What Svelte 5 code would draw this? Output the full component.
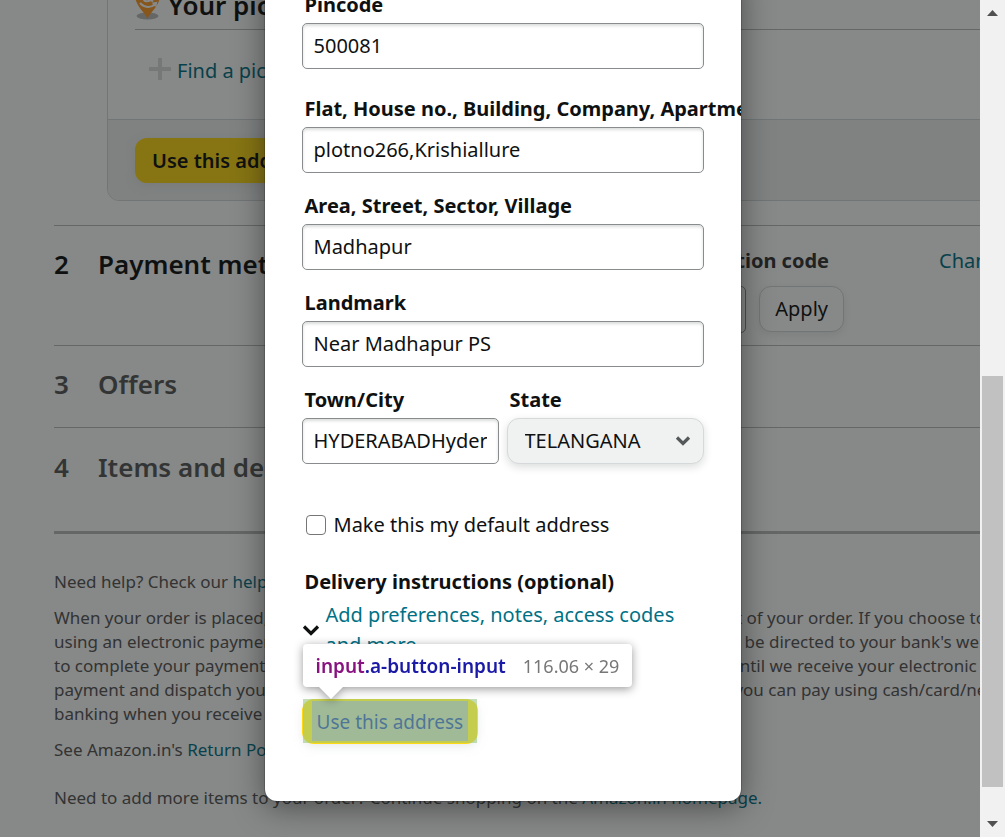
<script>
  let pincode = $state('500081');
  let flat = $state('plotno266,Krishiallure');
  let area = $state('Madhapur');
  let landmark = $state('Near Madhapur PS');
  let city = $state('HYDERABADHyderabad');
  let makeDefault = $state(false);
</script>

<div class="window">
  <main class="page">
    <section class="card">
      <div class="card-body">
        <h3 class="pickup">
          <svg width="25" height="48" viewBox="0 0 25 48" aria-hidden="true">
            <ellipse cx="12.500" cy="35" rx="11" ry="3.500" fill="#bbb" />
            <path d="M12.500 38C10 31 0 25 0 14a12.500 12.500 0 0 1 25 0c0 11-10 17-12.500 24z" fill="#ff9a26" />
            <path d="M16 18c-1.500 3-7 3-7 0s4-3.500 7-3.500M16 13v6l2 1.500" fill="none" stroke="#fff" stroke-width="2.200" />
            <path d="M5 22c4.500 5 10.500 5 15 1.500M17.500 22.500l3.500-.500-.500 3.500" fill="none" stroke="#fff" stroke-width="2" />
          </svg>
          Your pickup location
        </h3>
        <div class="find">
          <svg width="22" height="26" viewBox="0 0 22 26" aria-hidden="true">
            <path d="M11 0v22M0 11h22" stroke="#ddd" stroke-width="4" />
          </svg>
          <a href="#pickup">Find a pickup location near you</a>
        </div>
      </div>
      <div class="card-foot">
        <button class="primary">Use this address</button>
      </div>
    </section>

    <section class="step payment">
      <h2>2</h2>
      <h2>Payment method</h2>
      <div class="promo">
        <label for="promo">Gift card or promotion code</label>
        <div class="promo-row">
          <input id="promo" type="text" />
          <button class="apply">Apply</button>
        </div>
      </div>
      <a class="change" href="#payment">Change</a>
    </section>
    <section class="step offers muted">
      <h2>3</h2>
      <h2>Offers</h2>
    </section>
    <section class="step items muted">
      <h2>4</h2>
      <h2>Items and delivery</h2>
    </section>

    <footer>
      <p>Need help? Check our <a href="#help">help pages</a> or <a href="#contact">contact us</a></p>
      <p>
        When your order is placed, we will send you an e-mail message acknowledging receipt of your order. If you choose to pay<br />
        using an electronic payment method (credit card, debit card and net banking), you will be directed to your bank's website<br />
        to complete your payment. Your contract to purchase the items will not be complete until we receive your electronic<br />
        payment and dispatch your orders. If you choose to pay using Pay on Delivery (POD), you can pay using cash/card/net<br />
        banking when you receive your item.
      </p>
      <p class="policy">See Amazon.in's <a href="#returns">Return Policy</a>.</p>
      <p>Need to add more items to your order? Continue shopping on the <a href="#home">Amazon.in homepage.</a></p>
    </footer>
  </main>

  <div class="scrollbar" aria-hidden="true">
    <svg width="11" height="6" viewBox="0 0 11 6"><path d="M0 6L5.500 0L11 6z" fill="#505050" /></svg>
    <div class="track"><div class="thumb"></div></div>
    <svg width="11" height="6" viewBox="0 0 11 6"><path d="M0 0h11L5.500 6z" fill="#505050" /></svg>
  </div>

  <div class="shade"></div>

  <div class="layer">
    <form class="modal">
      <div class="field first">
        <label for="pin">Pincode</label>
        <input id="pin" type="text" bind:value={pincode} />
      </div>
      <div class="field">
        <label for="flat">Flat, House no., Building, Company, Apartment</label>
        <input id="flat" type="text" bind:value={flat} />
      </div>
      <div class="field">
        <label for="area">Area, Street, Sector, Village</label>
        <input id="area" type="text" bind:value={area} />
      </div>
      <div class="field">
        <label for="landmark">Landmark</label>
        <input id="landmark" type="text" bind:value={landmark} />
      </div>
      <div class="pair">
        <div class="field">
          <label for="city">Town/City</label>
          <input id="city" type="text" bind:value={city} />
        </div>
        <div class="field">
          <label for="state">State</label>
          <div class="select">
            <select id="state"><option>TELANGANA</option></select>
            <svg width="16" height="12" viewBox="0 0 16 12" aria-hidden="true">
              <path d="M2 2.500l6 6 6-6" fill="none" stroke="#565959" stroke-width="3.200" />
            </svg>
          </div>
        </div>
      </div>
      <label class="default">
        <input type="checkbox" bind:checked={makeDefault} />
        Make this my default address
      </label>
      <h4>Delivery instructions (optional)</h4>
      <div class="expand">
        <svg width="18" height="14" viewBox="0 0 18 14" aria-hidden="true">
          <path d="M2 3.500l7 7 7-7" fill="none" stroke="#0f1111" stroke-width="3.200" />
        </svg>
        <a href="#instructions">Add preferences, notes, access codes and more</a>
      </div>
      <div class="submit">
        <button type="button" class="primary plain">Use this address</button>
        <div class="highlight"></div>
        <div class="tip">
          <b><span>input</span>.a-button-input</b>
          <span class="size">116.06 × 29</span>
        </div>
      </div>
    </form>
  </div>
</div>

<style>
  :global(body) {
    margin: 0;
  }
  .window {
    position: relative;
    display: flex;
    height: 100vh;
    overflow: hidden;
    background: #fff;
    color: #0f1111;
    font: 20px/30px 'Noto Sans', 'Open Sans', sans-serif;
  }
  .window * {
    box-sizing: border-box;
  }
  h2, h3, h4, p {
    margin: 0;
  }
  a {
    color: #007185;
    text-decoration: none;
  }
  input, button, select {
    font: inherit;
    color: inherit;
    margin: 0;
  }
  label, h4 {
    font-weight: 700;
  }

  .page {
    flex: 1;
    min-width: 0;
    overflow: hidden;
    padding-left: 54px;
    white-space: nowrap;
  }
  .card {
    margin: -21px -20px 24px 53px;
    border: 1px solid #d5d9d9;
    border-radius: 12px;
    overflow: hidden;
  }
  .card-body {
    height: 139px;
    padding-left: 27px;
  }
  .pickup {
    display: flex;
    align-items: center;
    gap: 8px;
    height: 50px;
    border-bottom: 1px solid #bbb;
    font-size: 26px;
    font-weight: 600;
  }
  .find {
    display: flex;
    align-items: center;
    gap: 6px;
    padding: 26px 0 0 14px;
  }
  .card-foot {
    padding: 18px 27px 17px;
    border-top: 1px solid #d5d9d9;
    background: #f0f2f2;
  }
  .primary {
    height: 45px;
    padding: 0 17px;
    border: 0;
    border-radius: 12px;
    background: #ffd814;
    box-shadow: 0 3px 8px rgba(213, 217, 217, 0.5);
    font-weight: 600;
  }
  .step {
    display: grid;
    grid-template-columns: 44px 306px 440px auto;
    align-items: start;
    border-top: 1px solid #bbb;
  }
  .step h2 {
    font-size: 26px;
    font-weight: 600;
    line-height: 36px;
  }
  .payment {
    height: 120px;
    padding-top: 20px;
  }
  .offers {
    height: 82px;
    padding-top: 20px;
  }
  .items {
    height: 107px;
    padding-top: 21px;
    border-bottom: 3px solid #bbb;
  }
  .muted {
    color: #565959;
  }
  .promo label {
    display: block;
    padding-right: 15px;
    text-align: right;
    color: #333;
  }
  .promo-row {
    display: flex;
    gap: 13px;
    padding-top: 10px;
  }
  .promo-row input {
    flex: 1;
    min-width: 0;
    height: 47px;
    border: 1px solid #888c8c;
    border-radius: 5px;
  }
  .apply {
    height: 46px;
    padding: 0 15px;
    border: 1px solid #d5d9d9;
    border-radius: 12px;
    background: #fff;
    box-shadow: 0 3px 8px rgba(213, 217, 217, 0.5);
  }
  .change {
    padding-left: 95px;
  }
  footer {
    padding-top: 36px;
    font-size: 17px;
    line-height: 24px;
    color: #555;
  }
  footer p {
    margin-bottom: 12px;
  }
  footer .policy {
    margin-bottom: 24px;
  }

  .scrollbar {
    z-index: 2;
    display: flex;
    flex-direction: column;
    align-items: center;
    justify-content: space-between;
    width: 25px;
    padding: 10px 0;
    background: #f1f1f1;
  }
  .track {
    flex: 1;
    display: flex;
    align-items: flex-end;
    padding: 10px 0 34px;
  }
  .thumb {
    width: 21px;
    height: 54%;
    background: #c1c1c1;
  }

  .shade {
    position: absolute;
    inset: 0;
    background: rgba(15, 17, 17, 0.5);
  }
  .layer {
    position: absolute;
    inset: 0;
    display: flex;
    justify-content: center;
    align-items: flex-start;
  }
  .modal {
    width: 476px;
    margin-top: -30px;
    padding: 20px 37px 57px;
    border-radius: 12px;
    background: #fff;
    box-shadow: 0 0 0 1px rgba(15, 17, 17, 0.2), 0 6px 30px rgba(15, 17, 17, 0.5);
    overflow: hidden;
  }
  .field {
    display: flex;
    flex-direction: column;
    gap: 3px;
    margin-bottom: 18px;
    min-width: 0;
  }
  .first {
    margin-bottom: 25px;
  }
  .field label {
    padding-left: 3px;
    white-space: nowrap;
  }
  .field input {
    width: 100%;
    height: 46px;
    padding: 0 11px 2px;
    border: 1px solid #888c8c;
    border-radius: 5px;
    background: #fff;
    box-shadow: inset 0 2px 3px rgba(15, 17, 17, 0.15);
  }
  .pair {
    display: grid;
    grid-template-columns: 1fr 1fr;
    gap: 8px;
    margin-bottom: 28px;
  }
  .select {
    display: grid;
    align-items: center;
  }
  .select > * {
    grid-area: 1 / 1;
  }
  .select select {
    appearance: none;
    height: 46px;
    padding: 0 17px;
    border: 1px solid #d5d9d9;
    border-radius: 12px;
    background: #f0f2f2;
    box-shadow: 0 3px 8px rgba(15, 17, 17, 0.15);
  }
  .select svg {
    justify-self: end;
    margin-right: 13px;
    pointer-events: none;
  }
  .default {
    display: flex;
    align-items: center;
    gap: 8px;
    padding-left: 4px;
    margin-bottom: 27px;
    font-weight: 400;
  }
  .default input {
    appearance: none;
    width: 20px;
    height: 20px;
    border: 1px solid #767676;
    border-radius: 4px;
    background: #fff;
  }
  .default input:checked {
    background: #007185;
  }
  h4 {
    padding-left: 3px;
    margin-bottom: 3px;
    font-size: 20px;
  }
  .expand {
    display: flex;
    align-items: center;
    gap: 6px;
    margin-bottom: 39px;
  }
  .expand svg {
    flex: none;
  }
  .submit {
    position: relative;
    width: fit-content;
  }
  .submit .primary {
    display: block;
  }
  .submit .plain {
    padding: 0 15px;
    font-size: 19px;
    font-weight: 400;
  }
  .highlight {
    position: absolute;
    inset: 0 1px 1px;
    border: 2px solid rgba(147, 196, 125, 0.55);
    border-width: 2px 9px;
    background: rgba(111, 168, 220, 0.66) padding-box;
  }
  .tip {
    position: absolute;
    left: 1px;
    bottom: 57px;
    display: flex;
    align-items: center;
    gap: 17px;
    height: 43px;
    padding: 0 13px;
    border-radius: 4px;
    background: #fff;
    filter: drop-shadow(0 2px 5px rgba(0, 0, 0, 0.4));
    font-size: 18px;
    white-space: nowrap;
  }
  .tip::after {
    content: '';
    position: absolute;
    top: 100%;
    left: 16px;
    border: 12px solid transparent;
    border-top-color: #fff;
    border-bottom: 0;
  }
  .tip b {
    color: #1a1aa6;
    font-size: 19px;
    font-weight: 600;
  }
  .tip b span {
    color: #881280;
  }
  .size {
    color: #777;
  }
</style>
